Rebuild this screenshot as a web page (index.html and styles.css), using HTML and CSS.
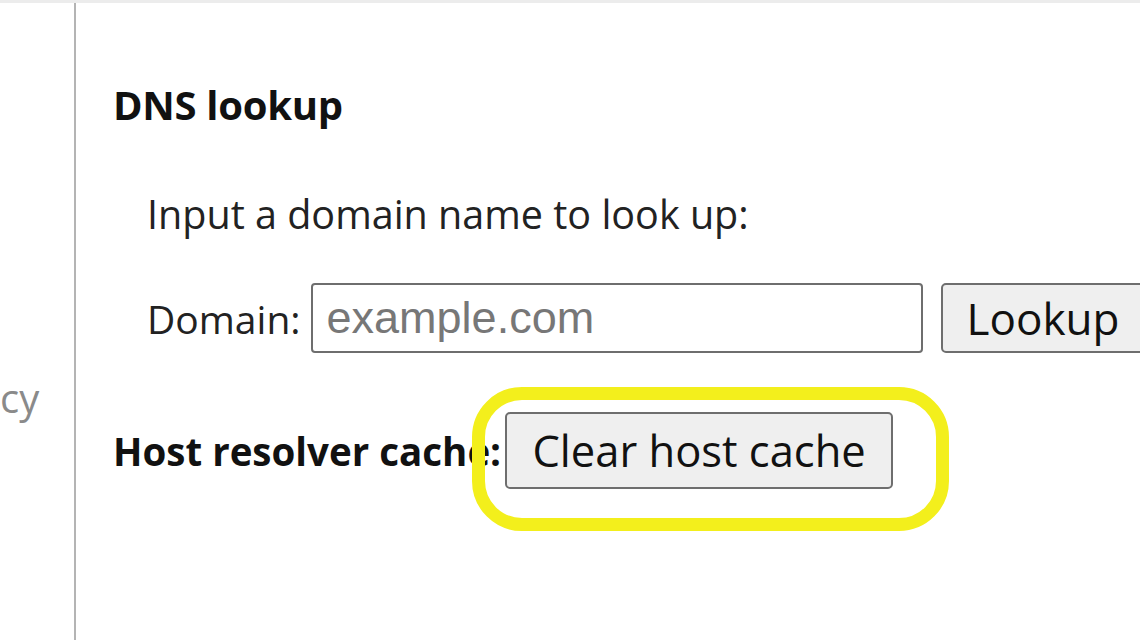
FILE: index.html
```html
<!DOCTYPE html>
<html>
<head>
<meta charset="utf-8">
<link rel="stylesheet" href="styles.css">
</head>
<body>
<div class="page">
  <nav class="sidebar">
    <div class="side-item">cy</div>
  </nav>
  <main class="main">
    <h2 class="heading">DNS lookup</h2>
    <div class="indent">
      <p class="hint">Input a domain name to look up:</p>
      <div class="lookup-row">
        <label class="label">Domain:</label>
        <input class="domain-input" type="text" placeholder="example.com">
        <button class="btn btn-lookup">Lookup</button>
      </div>
    </div>
    <div class="cache-row">
      <span class="cache-label">Host resolver cache:</span>
      <span class="highlight-wrap">
        <button class="btn btn-clear">Clear host cache</button>
        <span class="highlight"></span>
      </span>
    </div>
  </main>
</div>
</body>
</html>
```

FILE: styles.css
```css
html, body {
  margin: 0;
  padding: 0;
  background: #ffffff;
  width: 1140px;
  height: 640px;
  overflow: hidden;
}
.page {
  display: flex;
  height: 637px;
  border-top: 3px solid #ececec;
  font-family: "Open Sans", "Noto Sans", sans-serif;
  color: #1a1a1a;
}
.sidebar {
  width: 74px;
  flex: none;
  border-right: 2px solid #b4b4b4;
  overflow: hidden;
}
.side-item {
  margin: 370px 0 0 0;
  white-space: nowrap;
  font-size: 40px;
  line-height: 50px;
  color: #8a8a8a;
}
.main {
  flex: 1;
  padding-left: 37px;
  white-space: nowrap;
}
.heading {
  margin: 78px 0 0 0;
  font-size: 40px;
  font-weight: 700;
  line-height: 48px;
  color: #111;
  letter-spacing: -0.3px;
}
.indent {
  padding-left: 34px;
}
.hint {
  margin: 63px 0 0 0;
  font-size: 39.5px;
  line-height: 44px;
  color: #222;
}
.lookup-row {
  display: flex;
  align-items: center;
  margin-top: 47px;
}
.label {
  font-size: 39px;
  color: #222;
  margin-right: 10px;
}
.domain-input {
  width: 612px;
  height: 70px;
  box-sizing: border-box;
  border: 2px solid #6e6e6e;
  border-radius: 4px;
  padding: 0 14px;
  font-family: "Liberation Sans", Arial, sans-serif;
  font-size: 45px;
  color: #222;
  background: #fff;
}
.domain-input::placeholder {
  color: #777;
}
.btn {
  font-family: "Open Sans", "Noto Sans", sans-serif;
  background: #efefef;
  border: 2px solid #6e6e6e;
  border-radius: 5px;
  color: #111;
  box-sizing: border-box;
}
.btn-lookup {
  margin-left: 18px;
  height: 70px;
  padding: 0 24px;
  font-size: 44px;
}
.cache-row {
  display: flex;
  align-items: center;
  margin-top: 59px;
}
.cache-label {
  font-size: 38.5px;
  font-weight: 700;
  line-height: 48px;
  color: #111;
}
.highlight-wrap {
  position: relative;
  display: inline-flex;
  margin-left: 4px;
}
.btn-clear {
  height: 77px;
  padding: 0 24px;
  font-size: 43.5px;
  width: 388px;
}
.highlight {
  position: absolute;
  left: -33px;
  top: -25px;
  width: 477px;
  height: 144px;
  box-sizing: border-box;
  border: 13px solid #f3ef1c;
  border-radius: 50px;
}
```
